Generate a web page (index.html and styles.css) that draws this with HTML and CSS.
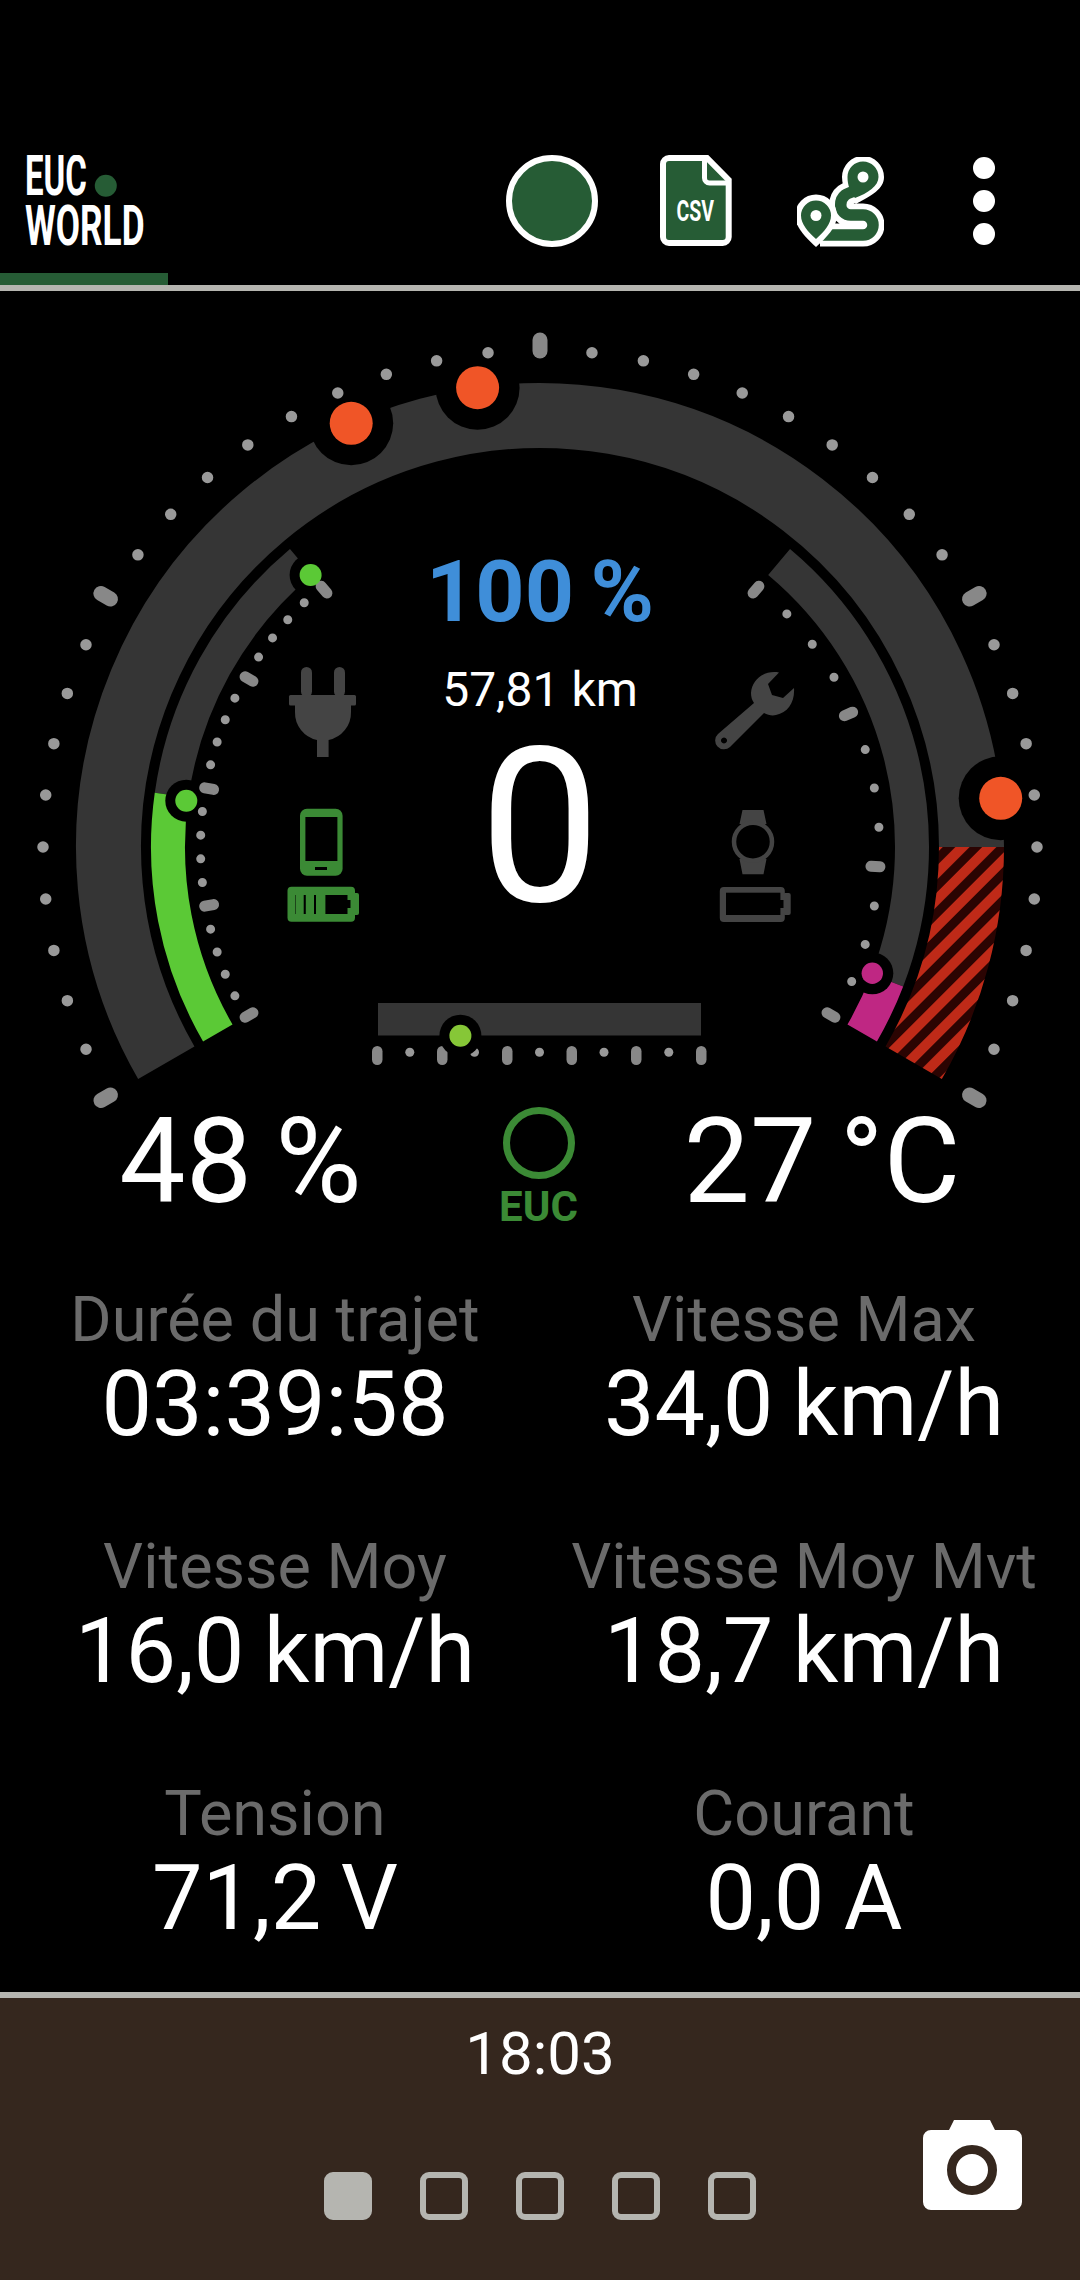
FILE: index.html
```html
<!DOCTYPE html>
<html lang="en">
<head>
  <meta charset="UTF-8">
  <meta name="viewport" content="width=device-width, initial-scale=1.0">
  <title>EUC World</title>
  <link rel="stylesheet" href="styles.css">
</head>
<body>
  <header class="topbar">
    <div class="topbar-row">
      <svg class="logo" viewBox="20 155 200 96" width="200" height="96">
        <text class="logo-text" transform="translate(25 195) scale(.6 1)">EUC</text>
        <circle class="fill-brand" cx="105.800" cy="185.700" r="11"/>
        <text class="logo-text" transform="translate(25 245) scale(.64 1)">WORLD</text>
      </svg>
      <div class="actions">
        <span class="status-dot"></span>
        <svg class="icon-csv" viewBox="10 10 72 92" width="72" height="92">
          <path class="fill-brand outline" d="M19 13H57L78.700 35V92a6 6 0 0 1-6 6H19a6 6 0 0 1-6-6V19a6 6 0 0 1 6-6Z"/>
          <path class="fold" d="M54.500 13V33a5 5 0 0 0 5 5H78.700"/>
          <text class="csv-text" transform="translate(26.500 76) scale(.65 1)">CSV</text>
        </svg>
        <svg class="icon-route" viewBox="147 12 87 90" width="87" height="90">
          <path class="route-out" d="M207 45C198 48 190.700 50 190.700 60A10 10 0 0 0 200.700 70H213A10 10 0 0 1 213 90H170"/>
          <path class="pin-out" d="M213 11A21 21 0 0 1 234 32C234 44 222 50 206 59C199 53 192 44 192 32A21 21 0 0 1 213 11Z"/>
          <path class="route-in" d="M207 45C198 48 190.700 50 190.700 60A10 10 0 0 0 200.700 70H213A10 10 0 0 1 213 90H170"/>
          <path class="fill-brand" d="M213 16.500A15.500 15.500 0 0 1 228.500 32C228.500 41 218 48 205 53C200 47 197.500 40 197.500 32A15.500 15.500 0 0 1 213 16.500Z"/>
          <circle class="fill-white" cx="213" cy="32" r="5.500"/>
          <path class="fill-white" d="M166 49.500A21 21 0 0 1 187 70.500C187 82 176 93 166 102C156 93 145 82 145 70.500A21 21 0 0 1 166 49.500Z"/>
          <path class="fill-brand" d="M166 55.500A15 15 0 0 1 181 70.500C181 79 174 87 166 94C158 87 151 79 151 70.500A15 15 0 0 1 166 55.500Z"/>
          <circle class="fill-white" cx="166" cy="70.500" r="5.500"/>
        </svg>
        <div class="more"><span></span><span></span><span></span></div>
      </div>
    </div>
    <div class="tab-mark"></div>
  </header>
  <div class="rule"></div>

  <section class="gauge">
    <svg class="dial" viewBox="0 291 1080 812" width="1080" height="812">
      <defs>
        <pattern id="hatch" width="19" height="19" patternUnits="userSpaceOnUse" patternTransform="rotate(-45 971 847)">
          <rect width="19" height="19" fill="#2b0402"/>
          <rect width="19" height="10" fill="#bf2a18"/>
        </pattern>
      </defs>

      <!-- speed arc -->
      <path class="arc arc-outer" d="M166.300 1062.750A431.500 431.500 0 1 1 971.500 847"/>
      <path class="arc arc-outer arc-hatch" d="M971.500 847A431.500 431.500 0 0 1 913.700 1062.750"/>

      <!-- battery and temperature arcs -->
      <path class="arc arc-inner" d="M171.600 795.200A372 372 0 0 1 300.900 562"/>
      <path class="arc arc-inner arc-green" d="M217.800 1033A372 372 0 0 1 171.600 795.200"/>
      <path class="arc arc-inner" d="M779.100 562A372 372 0 0 1 887.300 980.300"/>
      <path class="arc arc-inner arc-magenta" d="M887.300 980.300A372 372 0 0 1 862.200 1033"/>

      <!-- marker cut-outs go under the scales -->
      <circle class="halo" cx="351.200" cy="423.300" r="42"/>
      <circle class="halo" cx="477.600" cy="387.700" r="42"/>
      <circle class="halo" cx="1000.700" cy="798.300" r="42"/>
      <circle class="halo" cx="310.600" cy="575" r="21"/>
      <circle class="halo" cx="186.300" cy="800.700" r="21"/>
      <circle class="halo" cx="872.300" cy="973.300" r="21"/>

      <!-- scales -->
      <path class="dots dots-outer" pathLength="40" d="M109.600 1095.500A497 497 0 1 1 970.400 1095.500"/>
      <path class="dots dots-inner" pathLength="20" d="M246 1016.750A339.500 339.500 0 0 1 321.800 586.900"/>
      <path class="dots dots-inner" pathLength="12" d="M758.200 586.900A339.500 339.500 0 0 1 834 1016.750"/>

      <g class="major-outer">
        <line x1="540" x2="540" y1="340" y2="351" transform="rotate(-120 540 847)"/>
        <line x1="540" x2="540" y1="340" y2="351" transform="rotate(-60 540 847)"/>
        <line x1="540" x2="540" y1="340" y2="351" transform="rotate(0 540 847)"/>
        <line x1="540" x2="540" y1="340" y2="351" transform="rotate(60 540 847)"/>
        <line x1="540" x2="540" y1="340" y2="351" transform="rotate(120 540 847)"/>
      </g>
      <g class="major-inner">
        <line x1="540" x2="540" y1="506.500" y2="515.500" transform="rotate(-120 540 847)"/>
        <line x1="540" x2="540" y1="506.500" y2="515.500" transform="rotate(-100 540 847)"/>
        <line x1="540" x2="540" y1="506.500" y2="515.500" transform="rotate(-80 540 847)"/>
        <line x1="540" x2="540" y1="506.500" y2="515.500" transform="rotate(-60 540 847)"/>
        <line x1="540" x2="540" y1="506.500" y2="515.500" transform="rotate(-40 540 847)"/>
        <line x1="540" x2="540" y1="506.500" y2="515.500" transform="rotate(40 540 847)"/>
        <line x1="540" x2="540" y1="506.500" y2="515.500" transform="rotate(66.670 540 847)"/>
        <line x1="540" x2="540" y1="506.500" y2="515.500" transform="rotate(93.330 540 847)"/>
        <line x1="540" x2="540" y1="506.500" y2="515.500" transform="rotate(120 540 847)"/>
      </g>

      <!-- markers -->
      <circle class="mark-orange" cx="351.200" cy="423.300" r="21.500"/>
      <circle class="mark-orange" cx="477.600" cy="387.700" r="21.500"/>
      <circle class="mark-orange" cx="1000.700" cy="798.300" r="21.500"/>
      <circle class="mark-green" cx="310.600" cy="575" r="11"/>
      <circle class="mark-green" cx="186.300" cy="800.700" r="11"/>
      <circle class="mark-magenta" cx="872.300" cy="973.300" r="10.700"/>

      <!-- tilt bar -->
      <rect class="bar" x="378" y="1003" width="323" height="32.500"/>
      <g class="bar-major">
        <rect x="372" y="1046" width="10.500" height="19" rx="5.250"/>
        <rect x="437" y="1046" width="10.500" height="19" rx="5.250"/>
        <rect x="502" y="1046" width="10.500" height="19" rx="5.250"/>
        <rect x="566.500" y="1046" width="10.500" height="19" rx="5.250"/>
        <rect x="631" y="1046" width="10.500" height="19" rx="5.250"/>
        <rect x="696" y="1046" width="10.500" height="19" rx="5.250"/>
      </g>
      <g class="bar-minor">
        <circle cx="409.800" cy="1052.300" r="4.500"/>
        <circle cx="474.500" cy="1052.300" r="4.500"/>
        <circle cx="539.500" cy="1052.300" r="4.500"/>
        <circle cx="604" cy="1052.300" r="4.500"/>
        <circle cx="668.800" cy="1052.300" r="4.500"/>
      </g>
      <circle class="halo" cx="460.400" cy="1035.700" r="21"/>
      <circle class="mark-lime" cx="460.400" cy="1035.700" r="11"/>

      <!-- plug -->
      <g class="fill-icon">
        <rect x="301" y="667" width="11" height="30" rx="5.500"/>
        <rect x="334" y="667" width="11" height="30" rx="5.500"/>
        <rect x="289" y="695" width="67" height="10.500" rx="1.500"/>
        <path d="M295 705V712A28 28 0 0 0 317 740V757H328.600V740A28 28 0 0 0 351 712V705Z"/>
      </g>

      <!-- wrench -->
      <path class="fill-icon wrench" transform="translate(700 660)" d="M79 12.500C66 10 52 18 51 33C51 37 52 40 54 43L18 74A8.700 8.700 0 0 0 30 87L64 53C68 55 72 56 76 55C88 53 95 42 94 28L83 38L72 35L68 24ZM24 77.500a3 3 0 1 0 .01 0Z"/>

      <!-- phone battery -->
      <g class="fill-green">
        <rect x="300" y="808.700" width="42.600" height="67" rx="7"/>
        <rect x="287.500" y="886.700" width="67.500" height="35" rx="4"/>
        <rect x="352" y="893" width="7" height="22" rx="2"/>
      </g>
      <g class="fill-black">
        <rect x="305.400" y="817" width="32" height="44"/>
        <rect x="315" y="867" width="12" height="3"/>
        <rect x="295.500" y="895" width="52" height="19"/>
        <rect x="347" y="900" width="3.500" height="8"/>
      </g>
      <g class="fill-green">
        <rect x="296" y="895" width="7.700" height="19"/>
        <rect x="305.800" y="895" width="8.200" height="19"/>
        <rect x="316" y="895" width="9.400" height="19"/>
      </g>

      <!-- watch battery -->
      <g class="fill-icon">
        <path d="M742.500 810H763.500L766.500 824H739.500ZM739.500 859H766.500L763.500 874.300H742.500Z"/>
        <rect x="719.800" y="887" width="65" height="35" rx="4"/>
        <rect x="783" y="893" width="7.700" height="22" rx="2"/>
      </g>
      <circle class="watch-ring" cx="753" cy="841.700" r="19"/>
      <g class="fill-black">
        <rect x="726" y="892.700" width="54.400" height="22.300"/>
        <rect x="780" y="900" width="3.500" height="8"/>
      </g>
    </svg>

    <div class="gauge-center">
      <div class="battery-pct">100 %</div>
      <div class="distance">57,81 km</div>
      <div class="speed">0</div>
    </div>
  </section>

  <section class="readouts">
    <div class="readout">48 %</div>
    <div class="euc-state">
      <span class="euc-ring"></span>
      <span class="euc-label">EUC</span>
    </div>
    <div class="readout">27 °C</div>
  </section>

  <section class="stats">
    <div class="stat"><div class="stat-label">Durée du trajet</div><div class="stat-value">03:39:58</div></div>
    <div class="stat"><div class="stat-label">Vitesse Max</div><div class="stat-value">34,0 km/h</div></div>
    <div class="stat"><div class="stat-label">Vitesse Moy</div><div class="stat-value">16,0 km/h</div></div>
    <div class="stat"><div class="stat-label">Vitesse Moy Mvt</div><div class="stat-value">18,7 km/h</div></div>
    <div class="stat"><div class="stat-label">Tension</div><div class="stat-value">71,2 V</div></div>
    <div class="stat"><div class="stat-label">Courant</div><div class="stat-value">0,0 A</div></div>
  </section>

  <footer class="footer">
    <div class="clock">18:03</div>
    <div class="footer-row">
      <div class="pager">
        <span class="page page-active"></span>
        <span class="page"></span>
        <span class="page"></span>
        <span class="page"></span>
        <span class="page"></span>
      </div>
      <svg class="camera" viewBox="923 2120 99 90" width="99" height="90">
        <path class="fill-white" d="M931 2130H949L954 2120H990L995 2130H1014a8 8 0 0 1 8 8V2202a8 8 0 0 1-8 8H931a8 8 0 0 1-8-8V2138a8 8 0 0 1 8-8Z"/>
        <circle class="lens" cx="972" cy="2170" r="20.500"/>
      </svg>
    </div>
  </footer>
</body>
</html>
```

FILE: styles.css
```css
* {
  box-sizing: border-box;
}

body {
  margin: 0;
  width: 1080px;
  height: 2280px;
  overflow: hidden;
  background: #000;
  color: #fff;
  font-family: 'Roboto', sans-serif;
}

/* top bar */
.topbar {
  height: 285px;
  padding-top: 155px;
}

.topbar-row {
  display: flex;
  height: 118px;
}

.logo {
  margin-left: 20px;
}

.logo-text {
  font-size: 55px;
  font-weight: 700;
  fill: #fff;
}

.actions {
  display: flex;
  margin-left: auto;
  padding-right: 85px;
}

.status-dot {
  width: 92px;
  height: 92px;
  border: 6px solid #fff;
  border-radius: 50%;
  background: #265c35;
}

.icon-csv {
  margin-left: 62px;
}

.icon-route {
  margin-top: 2px;
  margin-left: 65px;
}

.more {
  display: flex;
  flex-direction: column;
  gap: 11px;
  margin-top: 2px;
  margin-left: 89px;
}

.more span {
  width: 22px;
  height: 22px;
  border-radius: 50%;
  background: #fff;
}

.tab-mark {
  width: 168px;
  height: 12px;
  background: #265c35;
}

.rule {
  height: 6px;
  background: #b5b5b0;
}

.fill-brand { fill: #265c35; }
.fill-white { fill: #fff; }
.fill-black { fill: #000; }
.fill-icon { fill: #444; }
.fill-green { fill: #3b8a35; }

.wrench {
  fill-rule: evenodd;
}

.outline {
  stroke: #fff;
  stroke-width: 6;
}

.fold {
  fill: none;
  stroke: #fff;
  stroke-width: 5;
}

.csv-text {
  font-size: 30px;
  font-weight: 700;
  fill: #fff;
}

.route-out,
.route-in {
  fill: none;
}

.route-out {
  stroke: #fff;
  stroke-width: 23;
}

.route-in {
  stroke: #265c35;
  stroke-width: 11.500;
}

.pin-out {
  fill: #fff;
}

/* gauge */
.gauge {
  position: relative;
  height: 812px;
}

.dial {
  display: block;
  overflow: visible;
}

.arc {
  fill: none;
  stroke: #353535;
}

.arc-outer {
  stroke-width: 65;
}

.arc-inner {
  stroke-width: 34;
}

.arc-hatch {
  stroke: url(#hatch);
}

.arc-green {
  stroke: #5bc936;
}

.arc-magenta {
  stroke: #bf2783;
}

.dots {
  fill: none;
  stroke: #999;
  stroke-linecap: round;
  stroke-dasharray: 0 1;
}

.dots-outer {
  stroke-width: 11.500;
}

.dots-inner {
  stroke-width: 9;
}

.major-outer line,
.major-inner line {
  stroke: #888;
  stroke-linecap: round;
}

.major-outer line {
  stroke-width: 15;
}

.major-inner line {
  stroke-width: 11;
}

.halo { fill: #000; }
.mark-orange { fill: #f05527; }
.mark-green { fill: #5bc936; }
.mark-magenta { fill: #bf2783; }
.mark-lime { fill: #86c737; }

.bar { fill: #353535; }
.bar-major rect { fill: #888; }
.bar-minor circle { fill: #999; }

.watch-ring {
  fill: #000;
  stroke: #444;
  stroke-width: 4.500;
}

.gauge-center {
  position: absolute;
  top: 258px;
  left: 0;
  width: 100%;
  display: flex;
  flex-direction: column;
  align-items: center;
}

.battery-pct {
  font-size: 86px;
  line-height: 85px;
  font-weight: 700;
  word-spacing: -5px;
  color: #3f8ed9;
}

.distance {
  margin-top: 32px;
  font-size: 48px;
  line-height: 48px;
}

.speed {
  margin-top: 29px;
  font-size: 215px;
  line-height: 170px;
}

/* values under the gauge */
.readouts {
  display: grid;
  grid-template-columns: 481px 115px 452px;
  height: 124px;
}

.readout {
  font-size: 118px;
  line-height: 118px;
  word-spacing: -6px;
  text-align: center;
}

.euc-state {
  display: flex;
  flex-direction: column;
  align-items: center;
  padding-top: 4px;
}

.euc-ring {
  width: 72px;
  height: 72px;
  border: 7px solid #3b8a35;
  border-radius: 50%;
}

.euc-label {
  margin-top: 8px;
  font-size: 42px;
  line-height: 40px;
  font-weight: 700;
  color: #3b8a35;
}

/* stats */
.stats {
  display: grid;
  grid-template-columns: 550px 508px;
  row-gap: 85px;
  margin-top: 61px;
  text-align: center;
}

.stat-label {
  font-size: 63px;
  line-height: 64px;
  color: #6b6b6b;
}

.stat-value {
  margin-top: 8px;
  font-size: 90px;
  line-height: 90px;
  word-spacing: -3px;
}

/* footer */
.footer {
  margin-top: 48px;
  height: 288px;
  border-top: 6px solid #b5b5b0;
  padding-top: 26px;
  background: #35271e;
}

.clock {
  font-size: 60px;
  line-height: 60px;
  text-align: center;
}

.footer-row {
  display: grid;
  grid-template-columns: 1fr auto 1fr;
  margin-top: 36px;
}

.pager {
  grid-column: 2;
  display: flex;
  gap: 48px;
  margin-top: 52px;
}

.page {
  width: 48px;
  height: 48px;
  border: 6px solid #b5b5b0;
  border-radius: 9px;
}

.page-active {
  background: #b5b5b0;
}

.camera {
  grid-column: 3;
  justify-self: end;
  margin-right: 58px;
}

.lens {
  fill: #fff;
  stroke: #35271e;
  stroke-width: 9;
}
```
